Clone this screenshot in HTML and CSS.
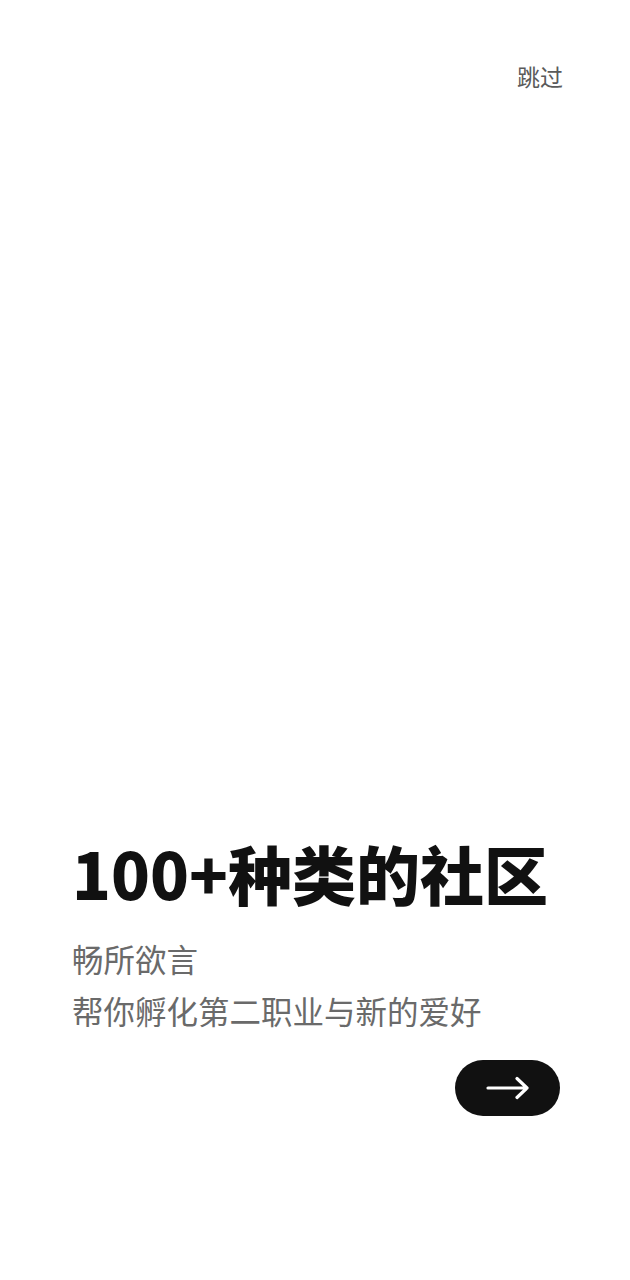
FILE: index.html
```html
<!DOCTYPE html>
<html lang="zh">
<head>
<meta charset="utf-8">
<link rel="stylesheet" href="styles.css">
</head>
<body>
<div class="page">
  <div class="top"><span class="skip">跳过</span></div>
  <div class="content">
    <h1 class="title">100+种类的社区</h1>
    <p class="sub">畅所欲言</p>
    <p class="sub">帮你孵化第二职业与新的爱好</p>
    <div class="actions">
      <button class="next" aria-label="下一步">
        <svg width="44" height="24" viewBox="0 0 44 24"><path d="M2 12H41M31 2.5L41 12L31 21.5" fill="none" stroke="#fff" stroke-width="3.2" stroke-linecap="round" stroke-linejoin="round"/></svg>
      </button>
    </div>
  </div>
</div>
</body>
</html>
```
FILE: styles.css
```css
html, body { margin: 0; padding: 0; background: #fff; }
body { font-family: "Noto Sans CJK SC", "Noto Sans", sans-serif; }
.page { width: 630px; height: 1280px; display: flex; flex-direction: column; }
.top { display: flex; justify-content: flex-end; padding: 60px 67px 0 0; }
.skip { font-size: 23px; line-height: 32px; color: #5a5a5a; }
.content { padding: 0 70px 0 72px; margin-top: 738px; }
.title { margin: 0; font-size: 64px; line-height: 84px; font-weight: 900; color: #111; }
.sub { margin: 0; font-size: 31.5px; line-height: 52px; color: #6a6a6a; }
.sub:first-of-type { margin-top: 18px; }
.actions { display: flex; justify-content: flex-end; margin-top: 24px; }
.next { width: 105px; height: 56px; border: 0; border-radius: 28px; background: #111; display: flex; align-items: center; justify-content: center; padding: 0; }
```
